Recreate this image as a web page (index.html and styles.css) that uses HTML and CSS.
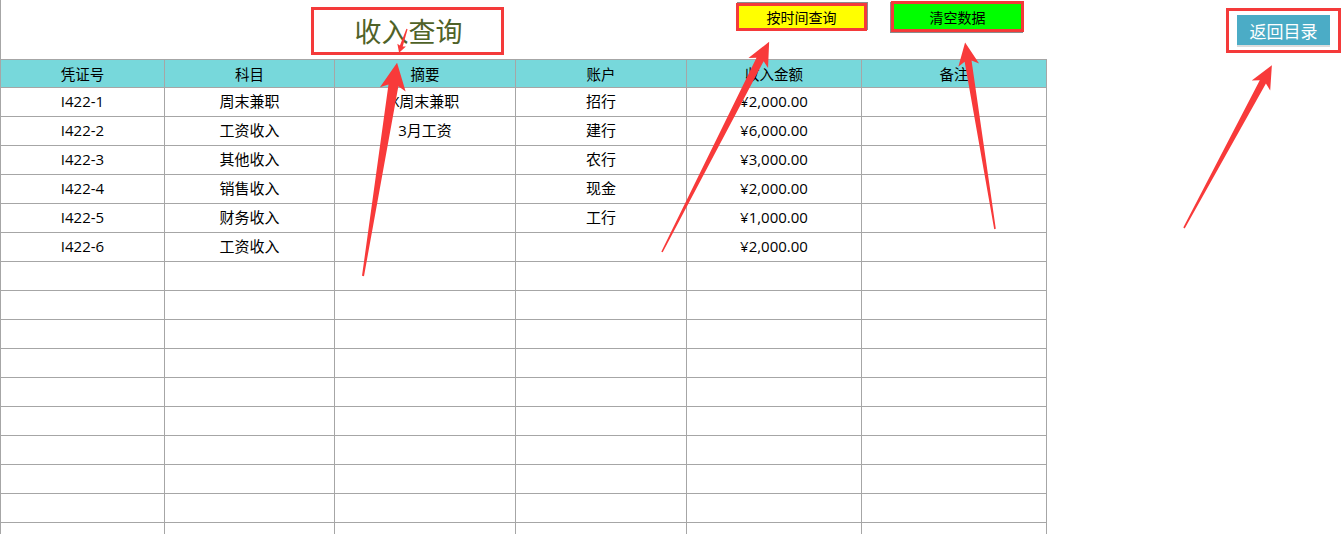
FILE: index.html
```html
<!DOCTYPE html>
<html lang="zh-CN">
<head>
<meta charset="utf-8">
<title>收入查询</title>
<link rel="stylesheet" href="styles.css">
</head>
<body>
<div class="sheet">
  <div class="top">
    <div class="title-box">收入查询</div>
    <div class="btn btn-yellow">按时间查询</div>
    <div class="btn btn-green">清空数据</div>
    <div class="back-box"><div class="back-btn">返回目录</div></div>
  </div>
  <div class="grid">
    <div class="cell head">凭证号</div>
    <div class="cell head">科目</div>
    <div class="cell head">摘要</div>
    <div class="cell head">账户</div>
    <div class="cell head">收入金额</div>
    <div class="cell head">备注</div>

    <div class="cell">I422-1</div><div class="cell">周末兼职</div><div class="cell">X周末兼职</div><div class="cell">招行</div><div class="cell">¥2,000.00</div><div class="cell"></div>
    <div class="cell">I422-2</div><div class="cell">工资收入</div><div class="cell">3月工资</div><div class="cell">建行</div><div class="cell">¥6,000.00</div><div class="cell"></div>
    <div class="cell">I422-3</div><div class="cell">其他收入</div><div class="cell"></div><div class="cell">农行</div><div class="cell">¥3,000.00</div><div class="cell"></div>
    <div class="cell">I422-4</div><div class="cell">销售收入</div><div class="cell"></div><div class="cell">现金</div><div class="cell">¥2,000.00</div><div class="cell"></div>
    <div class="cell">I422-5</div><div class="cell">财务收入</div><div class="cell"></div><div class="cell">工行</div><div class="cell">¥1,000.00</div><div class="cell"></div>
    <div class="cell">I422-6</div><div class="cell">工资收入</div><div class="cell"></div><div class="cell"></div><div class="cell">¥2,000.00</div><div class="cell"></div>

    <div class="cell"></div><div class="cell"></div><div class="cell"></div><div class="cell"></div><div class="cell"></div><div class="cell"></div>
    <div class="cell"></div><div class="cell"></div><div class="cell"></div><div class="cell"></div><div class="cell"></div><div class="cell"></div>
    <div class="cell"></div><div class="cell"></div><div class="cell"></div><div class="cell"></div><div class="cell"></div><div class="cell"></div>
    <div class="cell"></div><div class="cell"></div><div class="cell"></div><div class="cell"></div><div class="cell"></div><div class="cell"></div>
    <div class="cell"></div><div class="cell"></div><div class="cell"></div><div class="cell"></div><div class="cell"></div><div class="cell"></div>
    <div class="cell sel"></div><div class="cell"></div><div class="cell"></div><div class="cell"></div><div class="cell"></div><div class="cell"></div>
    <div class="cell"></div><div class="cell"></div><div class="cell"></div><div class="cell"></div><div class="cell"></div><div class="cell"></div>
    <div class="cell"></div><div class="cell"></div><div class="cell"></div><div class="cell"></div><div class="cell"></div><div class="cell"></div>
    <div class="cell"></div><div class="cell"></div><div class="cell"></div><div class="cell"></div><div class="cell"></div><div class="cell"></div>
    <div class="cell"></div><div class="cell"></div><div class="cell"></div><div class="cell"></div><div class="cell"></div><div class="cell"></div>
  </div>

  <svg class="arrows" width="1344" height="534" viewBox="0 0 1344 534" xmlns="http://www.w3.org/2000/svg">
    <g fill="#F83A3A">
      <polygon transform="translate(407,29) rotate(108.43)" points="0,-0.6 18,-1.5 17,-4.5 25,0 17,4.5 18,1.5 0,0.6"/>
      <polygon transform="translate(363,276) rotate(-80.93)" points="0,-1 193,-5 189,-13 216,0 189,13 193,5 0,1"/>
      <polygon transform="translate(662,252) rotate(-63)" points="0,-0.8 216,-4 212,-11 236,0 212,11 216,4 0,0.8"/>
      <polygon transform="translate(995,229) rotate(-99.11)" points="0,-0.8 170,-3.5 166,-10.5 189,0 166,10.5 170,3.5 0,0.8"/>
      <polygon transform="translate(1184,228) rotate(-61.64)" points="0,-0.8 166,-3.5 162,-10.5 185,0 162,10.5 166,3.5 0,0.8"/>
    </g>
  </svg>
</div>
</body>
</html>
```

FILE: styles.css
```css
* { box-sizing: border-box; }

html, body {
  margin: 0;
  padding: 0;
  background: #ffffff;
}

body {
  font-family: "Open Sans", "Noto Sans CJK SC", sans-serif;
  color: #000;
  overflow: hidden;
}

.sheet {
  position: relative;
  width: 1344px;
  height: 534px;
  overflow: hidden;
  border-left: 1px solid #a6a6a6;
}

.top {
  display: flex;
  align-items: flex-start;
  height: 59px;
}

.title-box {
  margin-left: 310px;
  margin-top: 7px;
  width: 193px;
  height: 48px;
  border: 3px solid #f43a3a;
  display: flex;
  align-items: center;
  justify-content: center;
  font-family: "Noto Sans CJK SC", sans-serif;
  font-size: 27px;
  color: #4f6228;
  padding-left: 2px;
  padding-bottom: 1px;
}

.btn {
  display: flex;
  align-items: center;
  justify-content: center;
  border: 3px solid #f43a3a;
  font-family: "Noto Sans CJK SC", sans-serif;
  font-size: 14px;
  color: #000;
}

.btn-yellow {
  margin-left: 232px;
  margin-top: 3px;
  width: 131px;
  height: 28px;
  background: #ffff00;
  box-shadow: 1px -1px 0 #8c8c8c;
}

.btn-green {
  margin-left: 24px;
  margin-top: 1px;
  width: 133px;
  height: 31px;
  background: #00ff00;
  box-shadow: -1px 1px 0 #8c8c8c;
}

.back-box {
  margin-left: 202px;
  margin-top: 8px;
  width: 115px;
  height: 45px;
  border: 3px solid #f43a3a;
  padding: 4px 0 0 8px;
}

.back-btn {
  width: 93px;
  height: 30px;
  background: #4bacc6;
  color: #fff;
  font-family: "Noto Sans CJK SC", sans-serif;
  font-size: 17px;
  display: flex;
  align-items: center;
  justify-content: center;
  box-shadow: 0 2px 0 #dcdcdc;
}

.grid {
  display: grid;
  grid-template-columns: 164px 170px 181px 171px 175px 185px;
  width: 1046px;
  border-top: 1px solid #a6a6a6;
}

.cell {
  position: relative;
  height: 29px;
  border-right: 1px solid #a6a6a6;
  border-bottom: 1px solid #a6a6a6;
  display: flex;
  align-items: center;
  justify-content: center;
  font-size: 15px;
  white-space: nowrap;
  overflow: hidden;
  padding-bottom: 3px;
}

.cell.head {
  height: 28px;
  background: #77d8db;
  font-family: "Noto Sans CJK SC", sans-serif;
  font-size: 14.5px;
  padding-bottom: 1px;
}

.cell.sel::before {
  content: "";
  position: absolute;
  left: -1px;
  top: 0;
  width: 1px;
  height: 28px;
  background: #3cb043;
}

.arrows {
  position: absolute;
  left: -1px;
  top: 0;
  pointer-events: none;
}
```
